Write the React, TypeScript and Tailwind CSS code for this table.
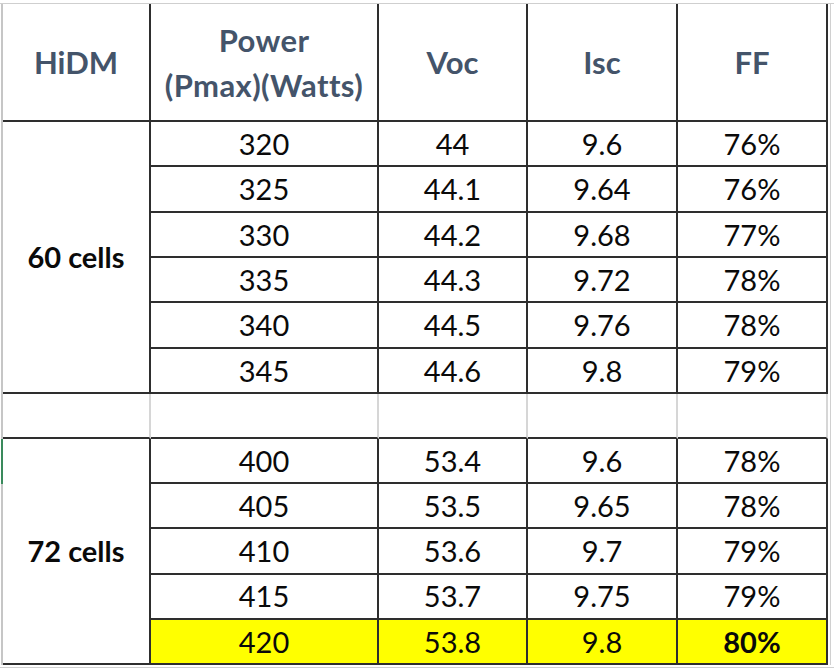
import React from "react";

type Row = [string, string, string, string];

const sixty: Row[] = [
  ["320", "44", "9.6", "76%"],
  ["325", "44.1", "9.64", "76%"],
  ["330", "44.2", "9.68", "77%"],
  ["335", "44.3", "9.72", "78%"],
  ["340", "44.5", "9.76", "78%"],
  ["345", "44.6", "9.8", "79%"],
];

const seventyTwo: Row[] = [
  ["400", "53.4", "9.6", "78%"],
  ["405", "53.5", "9.65", "78%"],
  ["410", "53.6", "9.7", "79%"],
  ["415", "53.7", "9.75", "79%"],
  ["420", "53.8", "9.8", "80%"],
];

const cell = "flex items-center justify-center border-r-2 border-b-2 border-[#2e2e2e]";

function DataRows({ rows, highlightLast }: { rows: Row[]; highlightLast?: boolean }) {
  return (
    <>
      {rows.map((r, i) => {
        const hl = highlightLast && i === rows.length - 1;
        return r.map((v, j) => (
          <div
            key={`${i}-${j}`}
            className={`${cell} ${hl ? "bg-[#ffff00]" : ""} ${hl && j === 3 ? "font-bold" : ""}`}
          >
            {v}
          </div>
        ));
      })}
    </>
  );
}

export default function App() {
  return (
    <div
      className="w-[834px] h-[669px] overflow-hidden bg-white pt-[3px] text-[29px] text-[#0a0a0a]"
      style={{ fontFamily: "Lato, 'Open Sans', sans-serif" }}
    >
      <div className="flex border-t border-[#cfcfcf]">
        <div className="relative ml-[1px] grid grid-cols-[148px_228px_149px_150px_150px] grid-rows-[118px_repeat(6,45.33px)_45px_repeat(5,45.2px)] border-l-2 border-[#c6c6c6]">
          {/* header */}
          <div className={`${cell} text-[31px] font-bold text-[#44546a]`}>HiDM</div>
          <div className={`${cell} flex-col pt-[2px] text-[31px] font-bold leading-[45px] tracking-[0.4px] text-[#44546a]`}>
            <span>Power</span>
            <span>(Pmax)(Watts)</span>
          </div>
          <div className={`${cell} text-[31px] font-bold text-[#44546a]`}>Voc</div>
          <div className={`${cell} text-[31px] font-bold text-[#44546a]`}>Isc</div>
          <div className={`${cell} text-[31px] font-bold text-[#44546a]`}>FF</div>

          {/* 60 cells */}
          <div className={`${cell} row-span-6 font-bold`}>60 cells</div>
          <DataRows rows={sixty} />

          {/* spacer row */}
          {[0, 1, 2, 3, 4].map((k) => (
            <div key={k} className="border-r-2 border-b-2 border-r-[#d6d6d6] border-b-[#2e2e2e]" />
          ))}

          {/* 72 cells */}
          <div className={`${cell} relative row-span-5 font-bold`}>
            72 cells
            <span className="absolute left-[-2px] top-0 h-[45px] w-[2px] bg-[#3a8a5c]" />
          </div>
          <DataRows rows={seventyTwo} highlightLast />
        </div>
        <div className="ml-[2px] flex-1 border-l border-[#d0d0d0]" />
      </div>
      <div className="mt-[2px] border-t border-[#d0d0d0]" />
    </div>
  );
}
